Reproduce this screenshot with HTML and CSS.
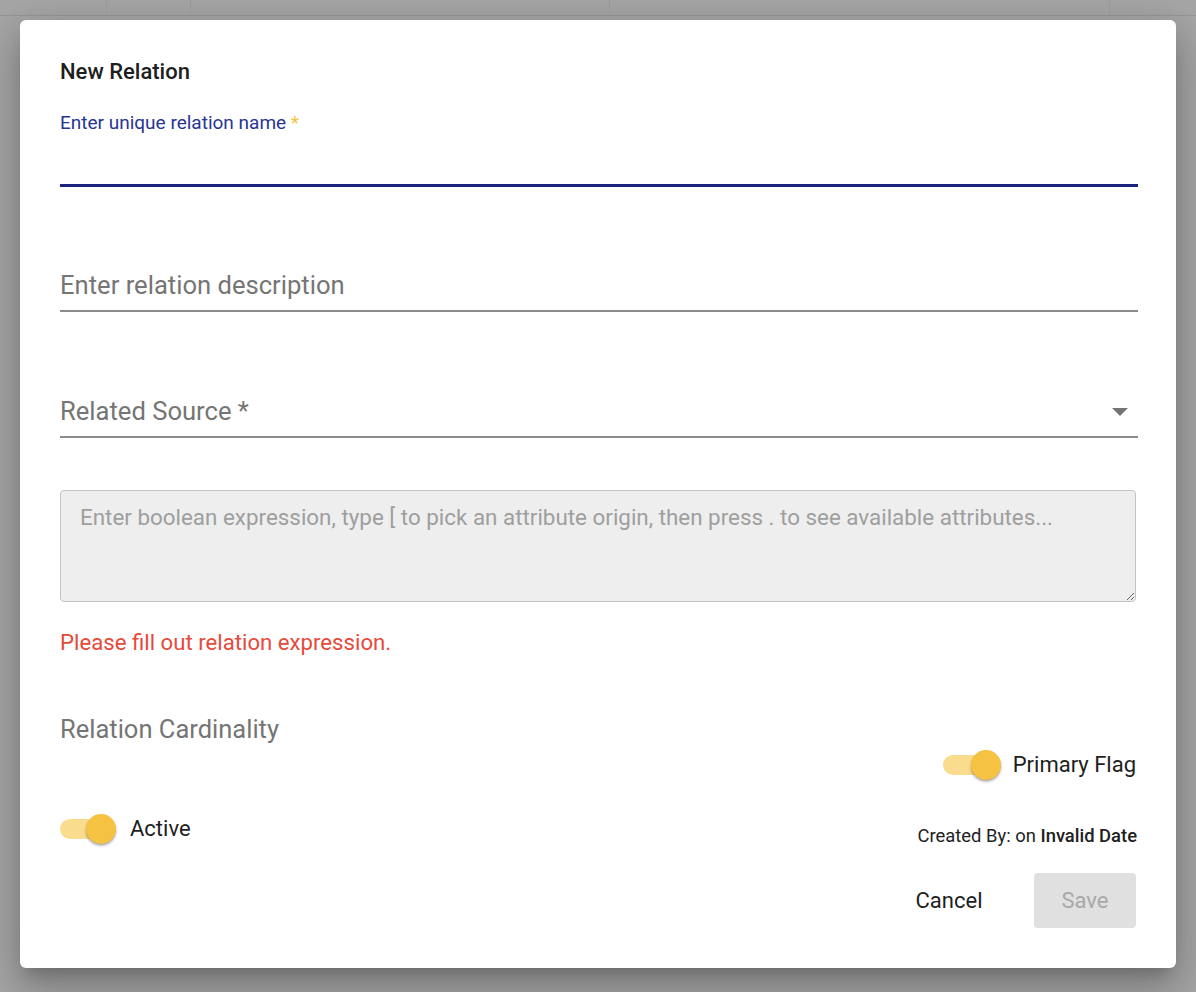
FILE: index.html
```html
<!DOCTYPE html>
<html>
<head>
<meta charset="utf-8">
<title>New Relation</title>
<link rel="stylesheet" href="styles.css">
</head>
<body>
<div class="backdrop-header">
  <div class="col c1"></div>
  <div class="col c2"></div>
  <div class="col c3"></div>
  <div class="col c4"></div>
  <div class="col c5"></div>
</div>
<div class="dialog">
  <h2 class="title">New Relation</h2>
  <div class="field focused">
    <label class="focus-label">Enter unique relation name <span class="req">*</span></label>
    <div class="input-space"></div>
  </div>
  <div class="field plain desc">
    <div class="placeholder">Enter relation description</div>
  </div>
  <div class="field plain select">
    <div class="placeholder">Related Source *</div>
    <span class="arrow"></span>
  </div>
  <textarea class="expr" placeholder="Enter boolean expression, type [ to pick an attribute origin, then press . to see available attributes..."></textarea>
  <div class="error">Please fill out relation expression.</div>
  <div class="section-label">Relation Cardinality</div>
  <div class="row right">
    <span class="toggle"><span class="track"></span><span class="knob"></span></span>
    <span class="toggle-label primary">Primary Flag</span>
  </div>
  <div class="row between">
    <div class="toggle-group">
      <span class="toggle"><span class="track"></span><span class="knob"></span></span>
      <span class="toggle-label active">Active</span>
    </div>
    <div class="created">Created By: on <strong>Invalid Date</strong></div>
  </div>
  <div class="actions">
    <button class="btn cancel">Cancel</button>
    <button class="btn save" disabled>Save</button>
  </div>
</div>
</body>
</html>
```

FILE: styles.css
```css
* { box-sizing: border-box; }
html, body { margin: 0; padding: 0; }
body {
  width: 1196px;
  height: 992px;
  overflow: hidden;
  background: #a6a6a6;
  font-family: Roboto, "Liberation Sans", Arial, sans-serif;
  color: #212121;
}
.backdrop-header {
  display: grid;
  grid-template-columns: 107px 84px 419px 500px 1fr;
  height: 16px;
  border-bottom: 1px solid #979797;
}
.backdrop-header .col { border-right: 1px solid #999; }
.backdrop-header .c5 { border-right: none; }
.dialog {
  margin: 4px 20px 0 20px;
  width: 1156px;
  height: 948px;
  background: #fff;
  border-radius: 6px;
  padding: 39px 38px 0 40px;
  box-shadow: 0 11px 15px -7px rgba(0,0,0,.2), 0 24px 38px 3px rgba(0,0,0,.14), 0 9px 46px 8px rgba(0,0,0,.12);
}
.title {
  margin: 0;
  font-size: 22px;
  line-height: 26px;
  font-weight: 500;
  color: #1e1e1e;
}
.field { position: relative; }
.focused { margin-top: 26px; border-bottom: 3px solid #1a237e; }
.focus-label {
  display: block;
  font-size: 19px;
  line-height: 24px;
  color: #283593;
}
.req { color: #f5c242; }
.input-space { height: 49px; }
.plain { border-bottom: 2px solid #8c8c8c; padding-bottom: 9px; }
.desc { margin-top: 82px; }
.select { margin-top: 83px; }
.placeholder {
  font-size: 25.6px;
  line-height: 32px;
  color: #757575;
}
.arrow {
  position: absolute;
  right: 10px;
  top: 13px;
  width: 0; height: 0;
  border-left: 8px solid transparent;
  border-right: 8px solid transparent;
  border-top: 8px solid #757575;
}
.expr {
  display: block;
  margin-top: 52px;
  width: 1076px;
  height: 112px;
  background: #eeeeee;
  border: 1px solid #c4c4c4;
  border-radius: 4px;
  padding: 12px 19px;
  font-family: Roboto, "Liberation Sans", Arial, sans-serif;
  font-size: 22.4px;
  line-height: 28px;
  color: #212121;
  outline: none;
}
.expr::placeholder { color: #9e9e9e; }
.error {
  margin-top: 27px;
  font-size: 22.2px;
  line-height: 26px;
  color: #e64a3b;
}
.section-label {
  margin-top: 59px;
  font-size: 25.5px;
  line-height: 30px;
  color: #757575;
}
.row { display: flex; align-items: center; }
.right { justify-content: flex-end; margin-top: 5px; height: 32px; padding-right: 2px; }
.between { justify-content: space-between; align-items: flex-start; margin-top: 32px; height: 32px; }
.toggle-group { display: flex; align-items: center; height: 32px; }
.toggle {
  position: relative;
  display: inline-block;
  width: 56px;
  height: 32px;
}
.track {
  position: absolute;
  left: 0; top: 6px;
  width: 56px; height: 20px;
  border-radius: 10px;
  background: #fadc8e;
}
.knob {
  position: absolute;
  left: 26px; top: 1px;
  width: 30px; height: 30px;
  border-radius: 50%;
  background: #f5c242;
  box-shadow: 0 2px 3px rgba(0,0,0,.25), 0 1px 1px rgba(0,0,0,.14);
}
.right .toggle { width: 58px; }
.right .knob { left: 28px; }
.toggle-label { font-size: 22px; line-height: 26px; color: #1e1e1e; }
.primary { margin-left: 12px; }
.active { margin-left: 14px; }
.created {
  margin-top: 12px;
  font-size: 18.4px;
  line-height: 22px;
  color: #212121;
  padding-right: 1px;
}
.created strong { font-weight: 500; }
.actions {
  display: flex;
  justify-content: flex-end;
  align-items: center;
  gap: 40px;
  margin-top: 28px;
  padding-right: 2px;
}
.btn {
  font-family: Roboto, "Liberation Sans", Arial, sans-serif;
  font-size: 22px;
  border: none;
  background: transparent;
  border-radius: 4px;
  padding: 0;
  height: 55px;
}
.cancel { color: #1e1e1e; width: 90px; }
.save { width: 102px; background: #e0e0e0; color: #a8a8a8; }
```
